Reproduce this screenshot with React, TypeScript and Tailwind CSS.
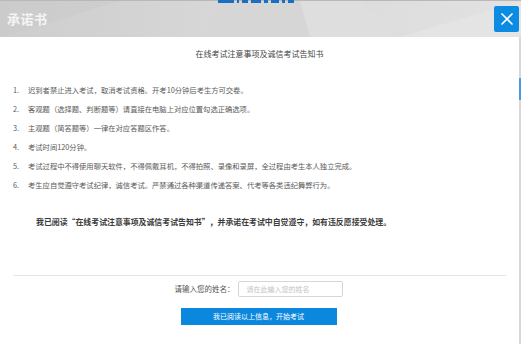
import { X } from "lucide-react"

const rules = [
  "迟到者禁止进入考试，取消考试资格。开考10分钟后考生方可交卷。",
  "客观题（选择题、判断题等）请直接在电脑上对应位置勾选正确选项。",
  "主观题（简答题等）一律在对应答题区作答。",
  "考试时间120分钟。",
  "考试过程中不得使用聊天软件，不得佩戴耳机，不得拍照、录像和录屏，全过程由考生本人独立完成。",
  "考生应自觉遵守考试纪律，诚信考试。严禁通过各种渠道传递答案、代考等各类违纪舞弊行为。",
]

export default function App() {
  return (
    <div className="w-[521px] h-[344px] bg-white overflow-hidden flex flex-col font-['Noto_Sans_CJK_SC',sans-serif]">
      {/* header */}
      <div className="relative h-[37px] shrink-0 flex items-center bg-gradient-to-r from-[#cdcdcd] via-[#d9d9d9] to-[#e2e2e2] border-t border-[#b8b8b8]">
        <svg className="absolute inset-0 w-full h-full" viewBox="0 0 521 37" preserveAspectRatio="none">
          <polygon points="215,0 300,0 310,37 205,37" fill="#d6d6d6" />
          <polygon points="300,0 360,0 400,37 310,37" fill="#dedede" />
          <polygon points="400,37 521,0 521,37" fill="#e6e6e6" opacity="0.7" />
          <polygon points="0,37 120,0 0,0" fill="#c9c9c9" opacity="0.5" />
        </svg>
        <div className="absolute left-[218px] top-[-1px] h-[3px] w-[84px] overflow-hidden">
          <div className="flex gap-[3px]">
            <span className="w-[16px] h-[3px] bg-[#1a6fc0]" />
            <span className="w-[2px] h-[3px] bg-[#1a6fc0]" />
            <span className="w-[6px] h-[3px] bg-[#1a6fc0]" />
            <span className="w-[10px] h-[3px] bg-[#1a6fc0]" />
            <span className="w-[4px] h-[3px] bg-[#1a6fc0]" />
            <span className="w-[8px] h-[3px] bg-[#1a6fc0]" />
            <span className="w-[3px] h-[3px] bg-[#1a6fc0]" />
            <span className="w-[6px] h-[3px] bg-[#1a6fc0]" />
          </div>
        </div>
        <span className="relative pl-[7px] text-[#f4f4f4] font-bold text-[13px] tracking-[0.5px]">承诺书</span>
        <button className="absolute right-[2px] top-[5px] w-[25px] h-[26px] rounded-[2px] bg-[#0b8ce2] flex items-center justify-center">
          <X className="w-[20px] h-[20px] text-white" strokeWidth={2} />
        </button>
      </div>

      {/* body */}
      <div className="relative flex-1 flex flex-col border-r-2 border-[#d8d8d8]">
        <span className="absolute right-[-2px] top-[41px] w-[2px] h-[22px] bg-[#4a9be0]" />
        <h1 className="mt-[11px] text-center text-[8px] leading-[12px] text-[#444]">
          在线考试注意事项及诚信考试告知书
        </h1>
        <ol className="mt-[21px] pl-[13px] text-[7.3px] leading-[19px] text-[#5a5a5a]">
          {rules.map((r, i) => (
            <li key={i} className="flex">
              <span className="w-[15px] shrink-0">{i + 1}.</span>
              <span>{r}</span>
            </li>
          ))}
        </ol>
        <p className="mt-[21px] pl-[36px] text-[7.9px] leading-[12px] font-semibold text-[#3c3c3c]">
          我已阅读“在线考试注意事项及诚信考试告知书”，并承诺在考试中自觉遵守，如有违反愿接受处理。
        </p>
        <div className="mt-[47px] mx-[13px] border-t border-[#e4e4e4]" />
        <div className="mt-[5px] flex items-center justify-center gap-[3px] pr-[2px]">
          <span className="text-[7.5px] text-[#555]">请输入您的姓名：</span>
          <div className="w-[105px] h-[16px] border border-[#d6d6d6] rounded-[2px] flex items-center pl-[8px] text-[7px] text-[#c2c2c2]">
            请在此输入您的姓名
          </div>
        </div>
        <div className="mt-[11px] flex justify-center pr-[2px]">
          <button className="w-[156px] h-[17px] bg-[#0b87dd] text-white text-[7px] flex items-center justify-center">
            我已阅读以上信息，开始考试
          </button>
        </div>
      </div>
    </div>
  )
}
